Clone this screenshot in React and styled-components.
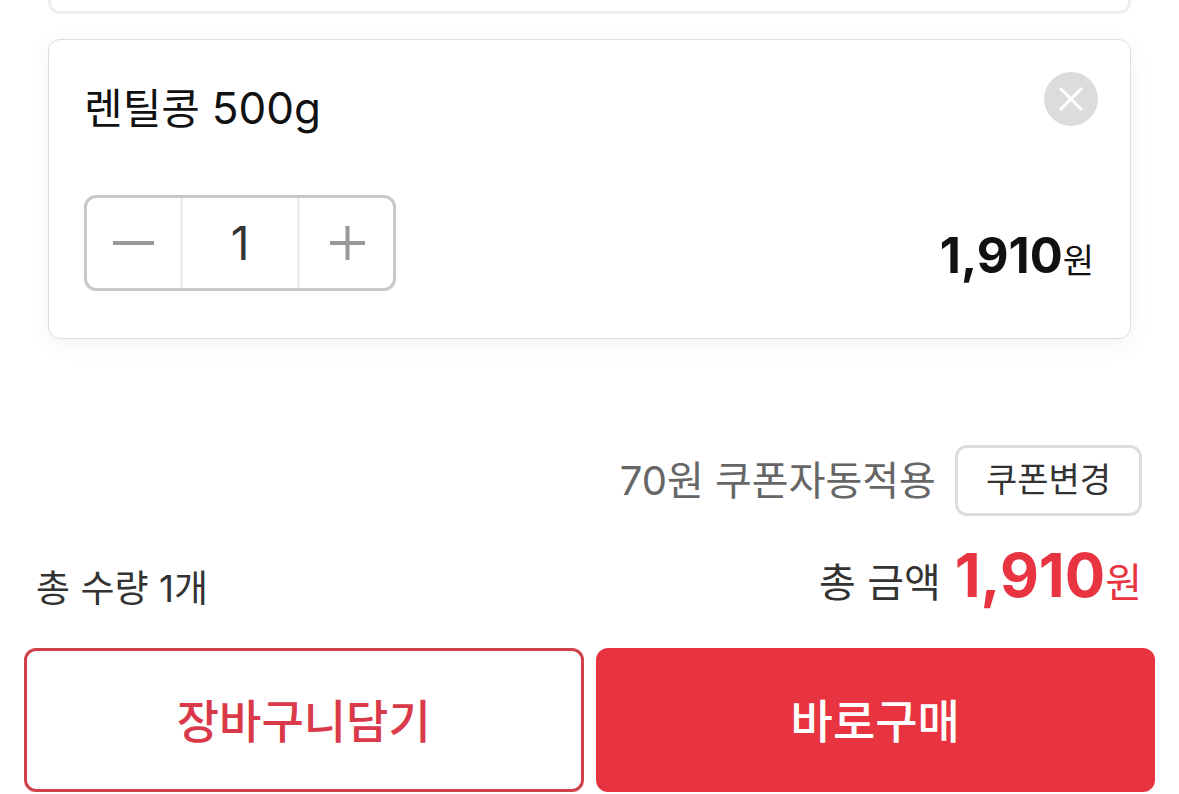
import { useState } from "react";
import styled, { createGlobalStyle, css } from "styled-components";

const GlobalStyle = createGlobalStyle`
  * {
    box-sizing: border-box;
  }
  body {
    margin: 0;
    background: #fff;
    color: #333;
    font-family: Inter, "Noto Sans CJK KR", sans-serif;
  }
  button,
  input {
    margin: 0;
    padding: 0;
    font-family: inherit;
    color: inherit;
  }
  button {
    cursor: pointer;
  }
`;

const Page = styled.main`
  display: flex;
  flex-direction: column;
`;

const OptionList = styled.section`
  display: flex;
  flex-direction: column;
  gap: 25px;
  padding: 0 48px;
`;

const PreviousOption = styled.div`
  height: 14px;
  border: 3px solid #eee;
  border-top: none;
  border-radius: 0 0 12px 12px;
`;

const OptionCard = styled.article`
  display: flex;
  flex-direction: column;
  gap: 69px;
  padding: 32px 32px 47px 35px;
  border: 1px solid #ddd;
  border-radius: 12px;
  box-shadow: 0 6px 24px rgba(0, 0, 0, 0.05);
`;

const CardRow = styled.div`
  display: flex;
  justify-content: space-between;
`;

const OptionName = styled.h2`
  margin: 0;
  padding-top: 6px;
  font-size: 42px;
  font-weight: 400;
  line-height: 60px;
  height: 54px;
  color: #111;
`;

const OptionWeight = styled.span`
  font-size: 44px;
`;

const RemoveButton = styled.button`
  display: grid;
  place-items: center;
  width: 54px;
  height: 54px;
  border: none;
  border-radius: 50%;
  background: #dcdcdc;
  color: #fff;
`;

const Stepper = styled.div`
  display: grid;
  grid-template-columns: 93px 120px 93px;
  height: 96px;
  border: 3px solid #c8c8c8;
  border-radius: 12px;
  overflow: hidden;
`;

const StepButton = styled.button`
  display: grid;
  place-items: center;
  border: none;
  background: none;
  color: #999;
`;

const QuantityInput = styled.input`
  width: 100%;
  border: solid #eee;
  border-width: 0 3px;
  font-size: 46px;
  text-align: center;
  background: none;
  outline: none;
`;

const Price = styled.p(
  (props) => css`
    margin: 0;
    display: flex;
    align-items: baseline;
    color: ${props.$total ? "#e83340" : "#111"};
    font-size: ${props.$total ? "40px" : "34px"};
    line-height: 60px;
    strong {
      font-size: ${props.$total ? "60px" : "49px"};
      font-weight: 700;
    }
  `,
);

const CardPrice = styled.div`
  padding: 31px 4px 0 0;
`;

const Summary = styled.section`
  display: flex;
  flex-direction: column;
  gap: 29px;
  padding: 106px 37px 0 36px;
`;

const CouponRow = styled.div`
  display: flex;
  justify-content: flex-end;
  align-items: center;
  gap: 19px;
`;

const CouponText = styled.span`
  font-size: 40px;
  line-height: 60px;
  color: #666;
`;

const CouponButton = styled.button`
  padding: 0 28px 6px;
  height: 71px;
  border: 3px solid #ddd;
  border-radius: 12px;
  background: #fff;
  font-size: 34px;
`;

const TotalRow = styled.div`
  display: flex;
  justify-content: space-between;
  align-items: flex-end;
`;

const TotalLabel = styled.span(
  (props) => css`
    font-size: ${props.$large ? "40px" : "37px"};
    line-height: 48px;
  `,
);

const TotalAmount = styled.div`
  display: flex;
  align-items: baseline;
  gap: 14px;
`;

const Actions = styled.div`
  display: grid;
  grid-template-columns: 1fr 1fr;
  gap: 12px;
  padding: 35px 24px 2px;
`;

const ActionButton = styled.button(
  (props) => css`
    height: 144px;
    padding-bottom: 4px;
    border: 3px solid ${props.$primary ? "#e83340" : "#d0404e"};
    border-radius: 12px;
    background: ${props.$primary ? "#e83340" : "#fff"};
    color: ${props.$primary ? "#fff" : "#d93a49"};
    font-size: 46px;
    font-weight: 500;
  `,
);

const MinusIcon = () => (
  <svg width="42" height="42" viewBox="0 0 42 42" stroke="currentColor" strokeWidth="4" aria-hidden="true">
    <path d="M0 21h41" />
  </svg>
);

const PlusIcon = () => (
  <svg width="36" height="36" viewBox="0 0 36 36" stroke="currentColor" strokeWidth="4" aria-hidden="true">
    <path d="M1 18h35M18.5 1v34" />
  </svg>
);

const CloseIcon = () => (
  <svg width="26" height="26" viewBox="0 0 26 26" stroke="currentColor" strokeWidth="3" aria-hidden="true">
    <path d="M2 2l22 22M24 2L2 24" />
  </svg>
);

const UNIT_PRICE = 1910;

const Won = (props) => (
  <Price $total={props.$total}>
    <strong>{props.value.toLocaleString("en-US")}</strong>원
  </Price>
);

export default function App() {
  const [count, setCount] = useState(1);
  const total = UNIT_PRICE * count;

  return (
    <>
      <GlobalStyle />
      <Page>
        <OptionList>
          <PreviousOption />
          <OptionCard>
            <CardRow>
              <OptionName>
                렌틸콩 <OptionWeight>500g</OptionWeight>
              </OptionName>
              <RemoveButton aria-label="삭제">
                <CloseIcon />
              </RemoveButton>
            </CardRow>
            <CardRow>
              <Stepper>
                <StepButton aria-label="수량 감소" onClick={() => setCount(Math.max(1, count - 1))}>
                  <MinusIcon />
                </StepButton>
                <QuantityInput
                  aria-label="수량"
                  inputMode="numeric"
                  value={count}
                  onChange={(e) => setCount(Math.max(1, Number(e.target.value) || 1))}
                />
                <StepButton aria-label="수량 증가" onClick={() => setCount(count + 1)}>
                  <PlusIcon />
                </StepButton>
              </Stepper>
              <CardPrice>
                <Won value={total} />
              </CardPrice>
            </CardRow>
          </OptionCard>
        </OptionList>
        <Summary>
          <CouponRow>
            <CouponText>70원 쿠폰자동적용</CouponText>
            <CouponButton>쿠폰변경</CouponButton>
          </CouponRow>
          <TotalRow>
            <TotalLabel>총 수량 {count}개</TotalLabel>
            <TotalAmount>
              <TotalLabel $large>총 금액</TotalLabel>
              <Won value={total} $total />
            </TotalAmount>
          </TotalRow>
        </Summary>
        <Actions>
          <ActionButton>장바구니담기</ActionButton>
          <ActionButton $primary>바로구매</ActionButton>
        </Actions>
      </Page>
    </>
  );
}
